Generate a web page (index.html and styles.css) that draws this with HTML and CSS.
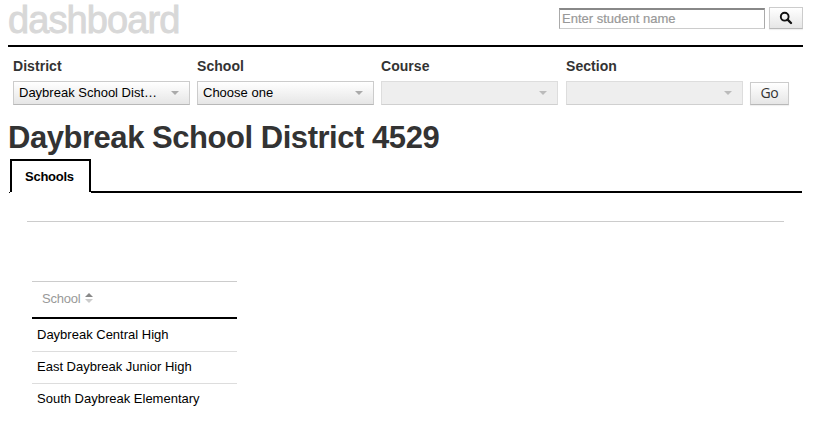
FILE: index.html
```html
<!DOCTYPE html>
<html lang="en">
<head>
<meta charset="utf-8">
<title>dashboard</title>
<link rel="stylesheet" href="styles.css">
</head>
<body>
<header class="header">
  <div class="brand">dashboard</div>
  <form class="search">
    <input class="search-input" type="text" placeholder="Enter student name">
    <button class="button search-button" type="button" aria-label="Search">
      <svg width="14" height="14" viewBox="0 0 14 14"><circle cx="5.7" cy="5.7" r="3.9" fill="none" stroke="#111" stroke-width="1.9"/><path d="M8.6 8.7L12 12" stroke="#111" stroke-width="2.4" stroke-linecap="round"/></svg>
    </button>
  </form>
</header>
<section class="filters">
  <div class="field"><div class="label">District</div><div class="select"><span>Daybreak School Dist…</span><i class="caret"></i></div></div>
  <div class="field"><div class="label">School</div><div class="select"><span>Choose one</span><i class="caret"></i></div></div>
  <div class="field"><div class="label">Course</div><div class="select disabled"><span></span><i class="caret"></i></div></div>
  <div class="field"><div class="label">Section</div><div class="select disabled"><span></span><i class="caret"></i></div></div>
  <button class="button go" type="button">Go</button>
</section>
<h1 class="title">Daybreak School District 4529</h1>
<nav class="tabs"><div class="tab-edge"></div><div class="tab">Schools</div><div class="tab-line"></div></nav>
<main class="content">
  <div class="divider"></div>
  <table class="grid">
    <thead><tr><th>School<svg class="sort" width="8" height="10" viewBox="0 0 8 10"><path d="M0 4L4 0L8 4Z" fill="#888"/><path d="M0 6H8L4 10Z" fill="#ccc"/></svg></th></tr></thead>
    <tbody>
      <tr><td>Daybreak Central High</td></tr>
      <tr><td>East Daybreak Junior High</td></tr>
      <tr><td>South Daybreak Elementary</td></tr>
    </tbody>
  </table>
</main>
</body>
</html>
```
FILE: styles.css
```css
* { box-sizing: border-box; }
body {
  margin: 0 13px 0 8px;
  background: #fff;
  color: #000;
  font: 13px/16px "Liberation Sans", Arial, sans-serif;
}
.header {
  display: flex;
  justify-content: space-between;
  height: 47px;
  border-bottom: 2px solid #000;
}
.brand {
  color: #d8d8d8;
  font-size: 38px;
  line-height: 40px;
  letter-spacing: -0.9px;
  -webkit-text-stroke: 0.9px #d8d8d8;
}
.search { display: flex; gap: 4px; padding-top: 7px; }
.search-input {
  width: 206px;
  height: 21px;
  margin-top: 1px;
  padding: 0 2px 2px;
  border: 1px solid #ccc;
  border-top: 2px solid #888;
  border-left-color: #aaa;
  border-right-color: #aaa;
  font: 13px "Liberation Sans", Arial, sans-serif;
}
.search-input::placeholder { color: #999; -webkit-text-stroke: 0.2px #999; }
.button {
  display: flex;
  align-items: center;
  justify-content: center;
  padding: 0;
  border: 1px solid #ccc;
  border-bottom-color: #b8b8b8;
  background: linear-gradient(#fff, #e6e6e6);
  color: #333;
  box-shadow: 0 1px 1px rgba(0, 0, 0, .06);
}
.search-button { width: 34px; height: 22px; }
.filters { display: flex; padding: 10px 0 0 5px; }
.field { width: 177px; margin-right: 7px; }
.field:nth-child(3) { margin-right: 8px; }
.label {
  height: 24px;
  color: #333;
  font-size: 14px;
  font-weight: bold;
  line-height: 18px;
  letter-spacing: 0.05px;
}
.select {
  display: flex;
  align-items: center;
  justify-content: space-between;
  height: 24px;
  padding: 0 10px 1px 5px;
  border: 1px solid #ccc;
  border-bottom-color: #b8b8b8;
  background: linear-gradient(#fff, #e6e6e6);
  white-space: nowrap;
}
.disabled { background: #eee; border-color: #ddd #ddd #d0d0d0; }
.caret {
  border: 4px solid transparent;
  border-top-color: #aaa;
  border-bottom: 0;
}
.disabled .caret { border-top-color: #bbb; }
.go {
  width: 39px;
  height: 23px;
  margin-top: 25px;
  padding-bottom: 2px;
  font: 14px/18px "Open Sans", sans-serif;
  letter-spacing: -0.4px;
}
.title {
  margin: 13px 0 0;
  color: #333;
  font-size: 31px;
  line-height: 40px;
  letter-spacing: -0.46px;
  white-space: nowrap;
}
.tabs { display: flex; align-items: flex-end; height: 34px; margin-top: 1px; }
.tab-edge { width: 2px; height: 1px; background: linear-gradient(90deg, #fff 50%, #000 50%); }
.tab {
  width: 81px;
  height: 33px;
  margin-bottom: 1px;
  border: 2px solid #000;
  border-bottom: 0;
  font-weight: bold;
  letter-spacing: -0.25px;
  line-height: 31px;
  padding-left: 13px;
}
.tab-line { flex: 1; height: 2px; margin-right: 1px; background: #000; }
.content { padding: 28px 19px 0; }
.divider { height: 1px; background: #ccc; }
.grid { width: 205px; margin: 59px 0 0 5px; border-collapse: separate; border-spacing: 0; }
.grid th {
  height: 38px;
  padding: 0 10px 2px;
  border-top: 1px solid #ccc;
  border-bottom: 2px solid #000;
  color: #999;
  font-weight: normal;
  letter-spacing: -0.2px;
  text-align: left;
}
.sort { margin-left: 4px; }
.grid td { height: 32px; padding: 0 5px 2px; border-bottom: 1px solid #ddd; }
.grid tr:first-child td { height: 33px; padding-bottom: 0; }
.grid tr:last-child td { border-bottom: 0; }
```
